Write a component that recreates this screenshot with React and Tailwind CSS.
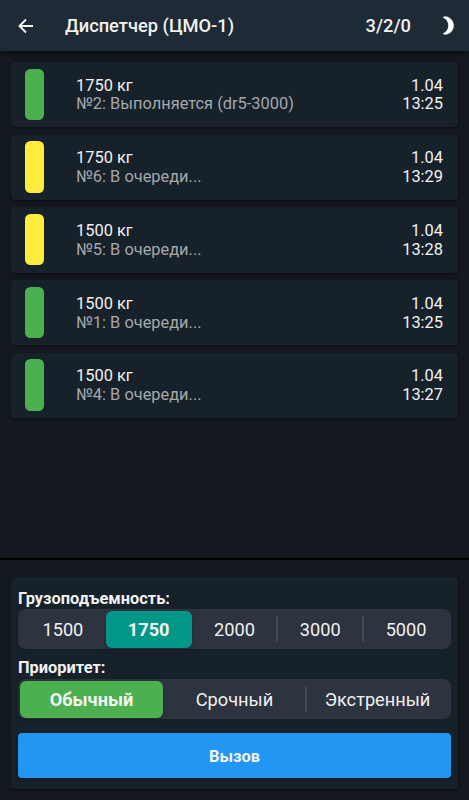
import React, { useState } from "react";
import clsx from "clsx";

const queue = [
  { id: 2, weight: "1750 кг", status: "№2: Выполняется (dr5-3000)", date: "1.04", time: "13:25", color: "bg-[#4caf50]" },
  { id: 6, weight: "1750 кг", status: "№6: В очереди...", date: "1.04", time: "13:29", color: "bg-[#ffeb3b]" },
  { id: 5, weight: "1500 кг", status: "№5: В очереди...", date: "1.04", time: "13:28", color: "bg-[#ffeb3b]" },
  { id: 1, weight: "1500 кг", status: "№1: В очереди...", date: "1.04", time: "13:25", color: "bg-[#4caf50]" },
  { id: 4, weight: "1500 кг", status: "№4: В очереди...", date: "1.04", time: "13:27", color: "bg-[#4caf50]" },
];

const capacities = ["1500", "1750", "2000", "3000", "5000"];
const priorities = ["Обычный", "Срочный", "Экстренный"];

function Segmented({ items, value, onChange, activeClass }) {
  const active = items.indexOf(value);
  return (
    <div className="flex h-10 rounded-lg bg-[#2d333f] px-0.5 py-[1.5px]">
      {items.map((item, i) => (
        <button
          key={item}
          type="button"
          onClick={() => onChange(item)}
          className={clsx(
            "relative flex-1 basis-0 rounded-[6px] pt-0.5 text-[18.2px] leading-none",
            i === active ? clsx("font-bold text-[#f4f4f4] shadow-[0_2px_5px_rgba(0,0,0,0.2)]", activeClass) : "text-[#f0f0f0]"
          )}
        >
          {i > 0 && i !== active && i - 1 !== active && (
            <span className="absolute -left-px top-1/2 h-[25px] w-[1.5px] -translate-y-1/2 bg-[#434954]" />
          )}
          {item}
        </button>
      ))}
    </div>
  );
}

export default function App() {
  const [capacity, setCapacity] = useState("1750");
  const [priority, setPriority] = useState("Обычный");

  return (
    <div className="flex h-screen flex-col overflow-hidden bg-[#14191f] font-[Roboto,sans-serif] text-[#f2f2f2]">
      <header className="flex h-[51px] shrink-0 items-center bg-[#1e2a35] pl-[18px] pr-[15px] shadow-[0_2px_5px_rgba(0,0,0,0.5)]">
        <svg className="h-4 w-4 shrink-0" viewBox="0 0 16 16" fill="none" stroke="#f5f5f5" strokeWidth="1.9">
          <path d="M15 8H1.7M8 1.5L1.5 8L8 14.5" />
        </svg>
        <h1 className="ml-[31px] flex-1 text-[18.3px] font-medium">Диспетчер (ЦМО-1)</h1>
        <span className="text-[18.3px] font-medium">3/2/0</span>
        <svg className="ml-[31px] h-[19px] w-3 shrink-0" viewBox="0 0 12 19" fill="#fff">
          <path d="M0.5 1.2C2 0.4 3.2 0.3 4 0.4C8.4 1 11.8 4.8 11.8 9.5C11.8 14.2 8.4 18 4 18.6C3.2 18.7 2 18.6 0.5 17.8C4 16.2 6.3 13.2 6.3 9.5C6.3 5.8 4 2.8 0.5 1.2Z" />
        </svg>
      </header>

      <main className="flex flex-1 flex-col gap-[7.4px] px-[11px] pt-[11px]">
        {queue.map((q) => (
          <div
            key={q.id}
            className="flex h-[65.3px] shrink-0 items-center rounded-[4px] bg-[#17212a] pl-3.5 pr-[15px] text-[16.4px] leading-[18.7px] shadow-[0_1px_3px_rgba(0,0,0,0.45)]"
          >
            <div className={clsx("mb-[0.6px] h-[51.5px] w-[18.5px] shrink-0 rounded-[5.5px]", q.color)} />
            <div className="ml-[32.5px] flex-1 pt-[1.6px]">
              <div>{q.weight}</div>
              <div className="text-[#a4a8ab]">{q.status}</div>
            </div>
            <div className="pt-[1.6px] text-right">
              <div>{q.date}</div>
              <div>{q.time}</div>
            </div>
          </div>
        ))}
      </main>

      <footer className="shrink-0 border-t-2 border-black px-[11px] pb-[11px] pt-[17px]">
        <div className="h-[212px] rounded-[4px] bg-[#17212a] px-[7px] pt-3 shadow-[0_1px_3px_rgba(0,0,0,0.45)]">
          <div className="h-5 text-[16.4px] font-bold leading-[19px]">Грузоподъемность:</div>
          <Segmented items={capacities} value={capacity} onChange={setCapacity} activeClass="bg-[#009688]" />
          <div className="mt-[9px] h-[21px] text-[16.4px] font-bold leading-[20px]">Приоритет:</div>
          <Segmented items={priorities} value={priority} onChange={setPriority} activeClass="bg-[#4caf50]" />
          <button
            type="button"
            className="mt-[14px] block h-[45px] w-full rounded-[4px] bg-[#2196f3] pt-[3px] text-[16.4px] font-bold leading-none shadow-[0_1px_3px_rgba(0,0,0,0.3)]"
          >
            Вызов
          </button>
        </div>
      </footer>
    </div>
  );
}
